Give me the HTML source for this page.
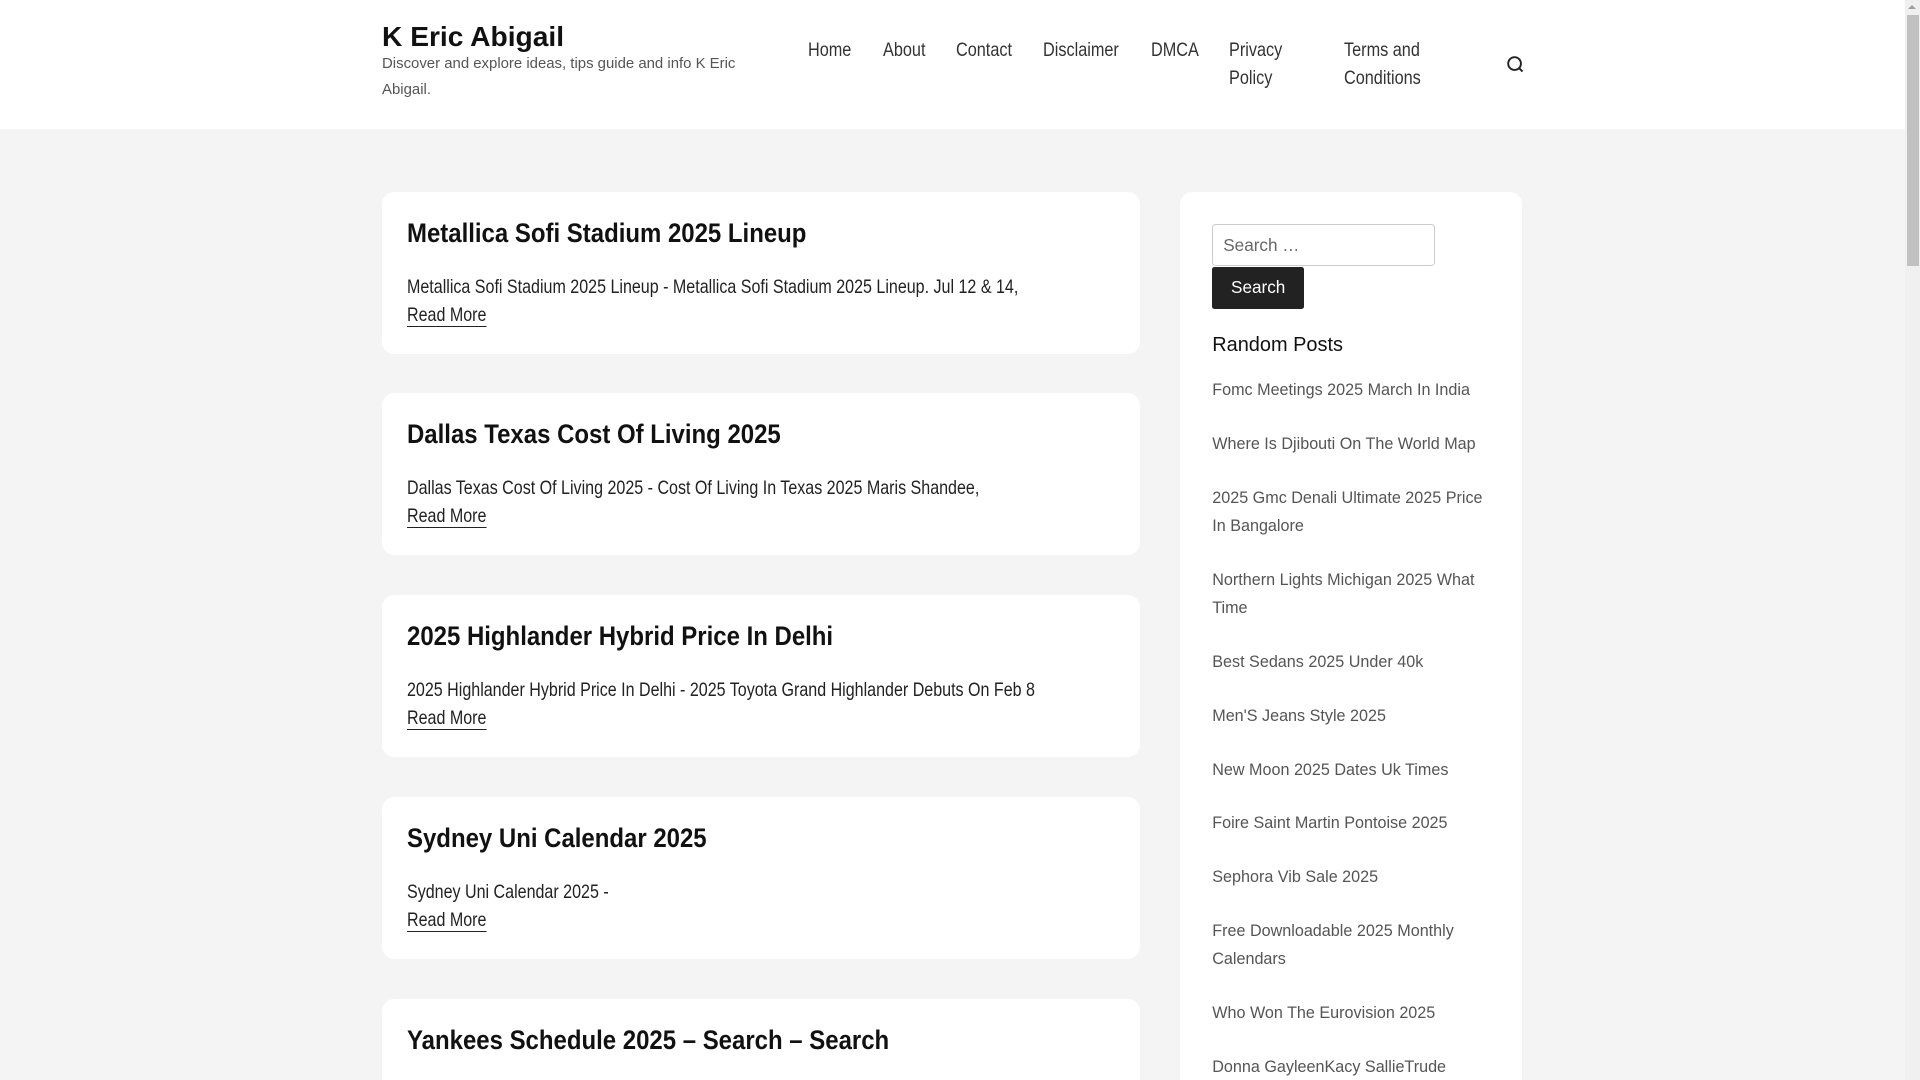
<!DOCTYPE html>
<html><head><meta charset="utf-8">
<style>
html,body{margin:0;padding:0;background:#f4f4f4;overflow:hidden;width:1920px;height:1080px}
#w{zoom:1.22449;position:relative;width:1568px;height:882px;font-family:"Liberation Sans",sans-serif;color:#222;overflow:hidden}
.a{position:absolute;white-space:nowrap}
.hdr{position:absolute;left:0;top:0;width:1556px;height:105px;background:#fff}
.n{font-size:16px;color:#333;line-height:23px;transform:scaleX(0.83);transform-origin:0 0}
.card{position:absolute;left:312px;width:619px;height:132px;background:#fff;border-radius:10px}
.card h2{position:absolute;left:20px;top:19px;margin:0;font-weight:bold;font-size:22px;line-height:30px;color:#111;white-space:nowrap;transform:scaleX(0.89);transform-origin:0 0}
.card p{position:absolute;left:20px;top:66px;margin:0;font-size:16px;line-height:23px;color:#222;white-space:nowrap;transform:scaleX(0.82);transform-origin:0 0}
.card p u{text-decoration:none;border-bottom:1px solid #222}
.side{position:absolute;left:964px;top:157px;width:279px;height:740px;background:#fff;border-radius:10px}
.rp{position:absolute;left:990px;font-size:13.2px;line-height:23px;color:#555;width:225px}
</style></head><body><div id="w">
<div class="hdr"></div>
<div class="a" style="left:312px;top:17px;font-size:23px;font-weight:bold;color:#111">K Eric Abigail</div>
<div class="a" style="left:312px;top:42px;font-size:12.2px;line-height:21px;color:#555;white-space:normal;width:300px">Discover and explore ideas, tips guide and info K Eric Abigail.</div>
<div class="a n" style="left:660px;top:29px">Home</div>
<div class="a n" style="left:721px;top:29px">About</div>
<div class="a n" style="left:781px;top:29px">Contact</div>
<div class="a n" style="left:852px;top:29px">Disclaimer</div>
<div class="a n" style="left:940px;top:29px">DMCA</div>
<div class="a n" style="left:1004px;top:29px">Privacy<br>Policy</div>
<div class="a n" style="left:1098px;top:29px">Terms and<br>Conditions</div>
<svg class="a" style="left:1230px;top:45px" width="16" height="16" viewBox="0 0 16 16"><circle cx="7" cy="7" r="5.2" fill="none" stroke="#222" stroke-width="1.6"/><line x1="10.8" y1="10.8" x2="13.5" y2="13.5" stroke="#222" stroke-width="1.6"/></svg>

<div class="card" style="top:157px"><h2>Metallica Sofi Stadium 2025 Lineup</h2><p>Metallica Sofi Stadium 2025 Lineup - Metallica Sofi Stadium 2025 Lineup. Jul 12 &amp; 14,<br><u>Read More</u></p></div>
<div class="card" style="top:321px"><h2>Dallas Texas Cost Of Living 2025</h2><p>Dallas Texas Cost Of Living 2025 - Cost Of Living In Texas 2025 Maris Shandee,<br><u>Read More</u></p></div>
<div class="card" style="top:486px"><h2>2025 Highlander Hybrid Price In Delhi</h2><p>2025 Highlander Hybrid Price In Delhi - 2025 Toyota Grand Highlander Debuts On Feb 8<br><u>Read More</u></p></div>
<div class="card" style="top:651px"><h2>Sydney Uni Calendar 2025</h2><p>Sydney Uni Calendar 2025 -<br><u>Read More</u></p></div>
<div class="card" style="top:816px;height:120px"><h2>Yankees Schedule 2025 – Search – Search</h2></div>

<div class="side"></div>
<div class="a" style="left:990px;top:183px;width:182px;height:34px;border:1px solid #ccc;border-radius:3px;background:#fff;box-sizing:border-box"></div>
<div class="a" style="left:999px;top:192px;font-size:14px;color:#666">Search …</div>
<div class="a" style="left:990px;top:218px;width:75px;height:34px;background:#222;border-radius:2px;color:#fff;font-size:14px;line-height:34px;text-align:center">Search</div>
<div class="a" style="left:990px;top:273px;font-size:16.3px;color:#111">Random Posts</div>
<div class="rp" style="top:307px">Fomc Meetings 2025 March In India</div>
<div class="rp" style="top:351px">Where Is Djibouti On The World Map</div>
<div class="rp" style="top:395px">2025 Gmc Denali Ultimate 2025 Price In Bangalore</div>
<div class="rp" style="top:462px">Northern Lights Michigan 2025 What Time</div>
<div class="rp" style="top:529px">Best Sedans 2025 Under 40k</div>
<div class="rp" style="top:573px">Men'S Jeans Style 2025</div>
<div class="rp" style="top:617px">New Moon 2025 Dates Uk Times</div>
<div class="rp" style="top:661px">Foire Saint Martin Pontoise 2025</div>
<div class="rp" style="top:705px">Sephora Vib Sale 2025</div>
<div class="rp" style="top:749px">Free Downloadable 2025 Monthly Calendars</div>
<div class="rp" style="top:816px">Who Won The Eurovision 2025</div>
<div class="rp" style="top:860px">Donna GayleenKacy SallieTrude</div>

<div class="a" style="left:1556px;top:0;width:12px;height:882px;background:#f0f0f0"></div>
<div class="a" style="left:1557px;top:12px;width:10px;height:205px;background:#c1c1c1"></div>
<div class="a" style="left:1558px;top:4px;width:0;height:0;border-left:4px solid transparent;border-right:4px solid transparent;border-bottom:4px solid #a0a0a0"></div>
</div></body></html>
